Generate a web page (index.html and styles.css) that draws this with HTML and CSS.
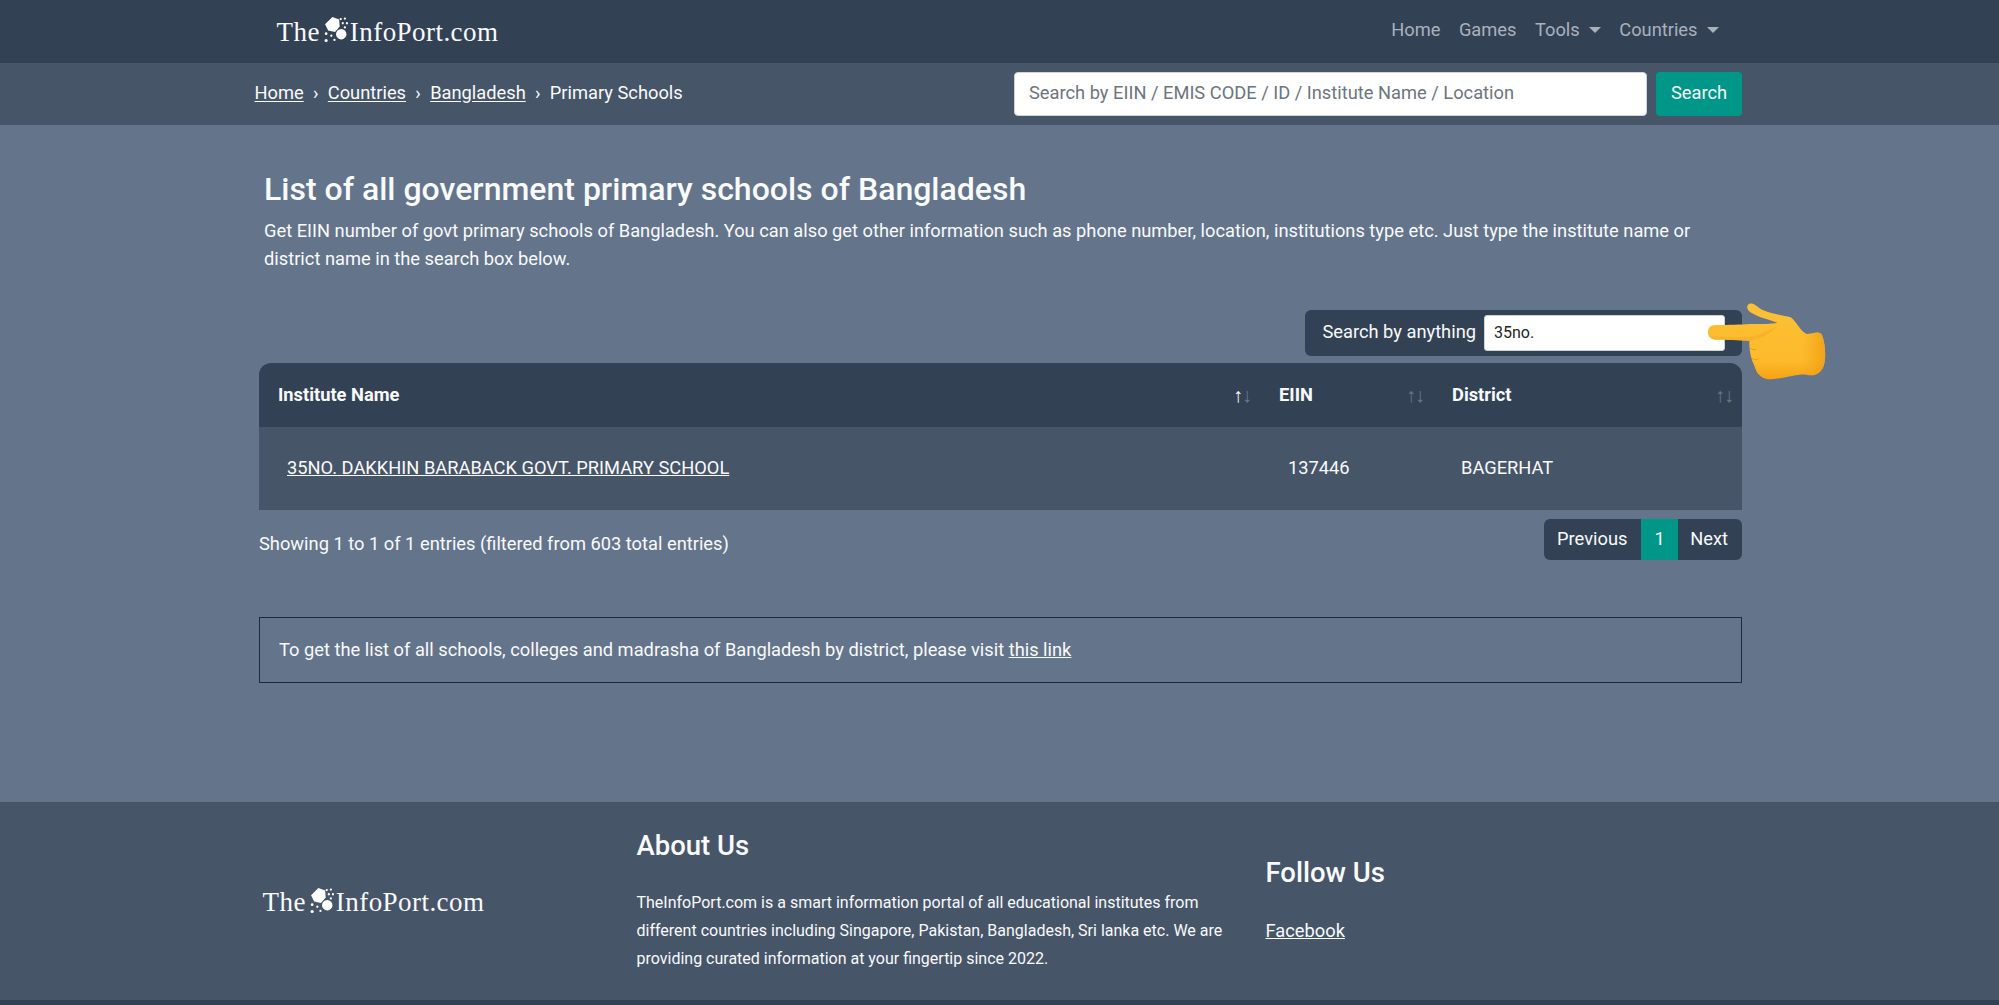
FILE: index.html
```html
<!DOCTYPE html>
<html lang="en">
<head>
<meta charset="utf-8">
<title>List of all government primary schools of Bangladesh</title>
<link rel="stylesheet" href="styles.css">
</head>
<body>
<svg class="defs" width="0" height="0" aria-hidden="true">
  <symbol id="mark" viewBox="0 0 24 24">
    <path d="M9 0l6.500 2.500.5 6.500-4.500 5.500-6.500-1.500L2 7z" fill="#fff"/>
    <circle cx="17.500" cy="16.500" r="5" fill="#fff"/>
    <circle cx="17" cy="2" r="1.100" fill="#fff"/><circle cx="21" cy="1.500" r="1.100" fill="#fff"/>
    <circle cx="19" cy="6" r="1.100" fill="#fff"/><circle cx="23" cy="6" r="1.100" fill="#fff"/>
    <circle cx="21" cy="10" r="1.100" fill="#fff"/><circle cx="3" cy="16" r="1.300" fill="#fff"/>
    <circle cx="8" cy="18" r="1.100" fill="#fff"/><circle cx="11" cy="22" r="1.100" fill="#fff"/>
    <circle cx="3" cy="22.500" r="1.500" fill="#fff"/>
  </symbol>
</svg>
<nav class="topnav">
  <div class="container topnav-in">
    <a class="logo" href="#">The<svg class="mark"><use href="#mark"/></svg>InfoPort.com</a>
    <ul class="menu">
      <li>Home</li><li>Games</li><li class="drop">Tools</li><li class="drop">Countries</li>
    </ul>
  </div>
</nav>
<div class="crumbbar">
  <div class="container crumb-in">
    <div class="crumbs"><a href="#">Home</a><span class="sep">›</span><a href="#">Countries</a><span class="sep">›</span><a href="#">Bangladesh</a><span class="sep">›</span><span>Primary Schools</span></div>
    <form class="topsearch">
      <input class="topinput" type="text" placeholder="Search by EIIN / EMIS CODE / ID / Institute Name / Location">
      <button class="btn-green" type="button">Search</button>
    </form>
  </div>
</div>
<main class="container main">
  <div class="intro">
    <h1>List of all government primary schools of Bangladesh</h1>
    <p>Get EIIN number of govt primary schools of Bangladesh. You can also get other information such as phone number, location, institutions type etc. Just type the institute name or district name in the search box below.</p>
  </div>
  <div class="filter-row">
    <label class="filter">Search by anything <input class="filter-input" type="text" value="35no."></label>
    <svg class="hand" viewBox="0 0 405 285" aria-hidden="true">
      <defs>
        <linearGradient id="hg" x1="0" y1="0" x2="0" y2="1"><stop offset="0" stop-color="#fcc035"/><stop offset=".75" stop-color="#fdba2c"/><stop offset="1" stop-color="#f5a312"/></linearGradient>
        <linearGradient id="hs" x1="0" y1="0" x2="1" y2="0"><stop offset="0" stop-color="#f3a112" stop-opacity="0"/><stop offset=".8" stop-color="#f3a112" stop-opacity="0"/><stop offset="1" stop-color="#ef9a0e" stop-opacity=".75"/></linearGradient>
      </defs>
      <path d="M24 112C26 96 36 93 50 93C90 93 120 92 150 90C185 90 215 90 232 86C192 72 162 65 146 50C136 38 144 26 158 29C168 32 175 42 190 49C215 60 250 64 272 70C288 80 300 112 320 120C340 119 358 108 366 123C376 150 379 190 371 216C362 240 342 248 320 242C290 240 260 252 215 256C188 257 170 242 163 215C153 195 147 170 148 141C120 137 80 139 45 137C30 135 22 124 24 112Z" fill="url(#hg)"/>
      <path d="M24 112C26 96 36 93 50 93C90 93 120 92 150 90C185 90 215 90 232 86C192 72 162 65 146 50C136 38 144 26 158 29C168 32 175 42 190 49C215 60 250 64 272 70C288 80 300 112 320 120C340 119 358 108 366 123C376 150 379 190 371 216C362 240 342 248 320 242C290 240 260 252 215 256C188 257 170 242 163 215C153 195 147 170 148 141C120 137 80 139 45 137C30 135 22 124 24 112Z" fill="url(#hs)"/>
      <path d="M28 126C60 131 120 131 160 127C180 121 205 112 232 96C212 118 188 134 150 141C120 137 80 139 45 137C36 135 31 131 28 126Z" fill="#f0a018" opacity=".35"/>
      <path d="M150 162C156 167 162 168 168 166M155 192C161 198 167 198 173 196" stroke="#eb9a14" stroke-width="3" fill="none"/>
    </svg>
  </div>
  <table class="data">
    <thead>
      <tr>
        <th class="c1"><span>Institute Name</span><span class="sort"><b>↑</b>↓</span></th>
        <th class="c2"><span>EIIN</span><span class="sort">↑↓</span></th>
        <th class="c3"><span>District</span><span class="sort">↑↓</span></th>
      </tr>
    </thead>
    <tbody>
      <tr><td><a href="#">35NO. DAKKHIN BARABACK GOVT. PRIMARY SCHOOL</a></td><td>137446</td><td>BAGERHAT</td></tr>
    </tbody>
  </table>
  <div class="table-foot">
    <div class="info">Showing 1 to 1 of 1 entries (filtered from 603 total entries)</div>
    <div class="pager"><span>Previous</span><span class="on">1</span><span>Next</span></div>
  </div>
  <div class="notice">To get the list of all schools, colleges and madrasha of Bangladesh by district, please visit <a href="#">this link</a></div>
</main>
<footer class="footer">
  <div class="container footer-in">
    <div class="f-logo"><a class="logo" href="#">The<svg class="mark"><use href="#mark"/></svg>InfoPort.com</a></div>
    <div class="f-about">
      <h3>About Us</h3>
      <p>TheInfoPort.com is a smart information portal of all educational institutes from different countries including Singapore, Pakistan, Bangladesh, Sri lanka etc. We are providing curated information at your fingertip since 2022.</p>
    </div>
    <div class="f-follow">
      <h3>Follow Us</h3>
      <a href="#">Facebook</a>
    </div>
  </div>
</footer>
<div class="bottom"></div>
</body>
</html>
```
FILE: styles.css
```css
* { box-sizing: border-box; }
html, body { margin: 0; padding: 0; }
body { background: #64748b; color: #f8fafc; font-family: Roboto, "Liberation Sans", sans-serif; font-size: 18.3px; line-height: 1.5; overflow: hidden; height: 1005px; }
a { color: inherit; }
.defs { position: absolute; }
.container { width: 1500px; margin: 0 auto; padding: 0 5px; }
.topnav { background: #334155; height: 63px; }
.topnav-in { display: flex; justify-content: space-between; align-items: center; height: 63px; padding-left: 27px; padding-right: 31px; }
.logo { display: flex; align-items: center; padding-top: 1px; font-family: "Liberation Serif", serif; font-size: 27px; letter-spacing: .45px; color: #f8fafc; text-decoration: none; line-height: 1; }
.mark { width: 25px; height: 25px; margin: -5px 2px 0 3px; }
.menu { display: flex; list-style: none; margin: 0 0 4px; padding: 0; gap: 18.500px; color: #a9b1bc; font-size: 18.3px; }
.drop::after { content: ""; display: inline-block; margin-left: 9px; vertical-align: 3px; border-top: 6px solid; border-left: 6px solid transparent; border-right: 6px solid transparent; }
.crumbbar { background: #475569; height: 62px; }
.crumb-in { display: flex; justify-content: space-between; align-items: center; height: 62px; padding-right: 7.500px; }
.crumbs { margin-top: -3px; }
.crumbs a { text-underline-offset: 2px; }
.sep { margin: 0 9.300px; }
.topsearch { display: flex; gap: 9px; }
.topinput { width: 633px; height: 44px; border: 1px solid #ced4da; border-radius: 4px; padding: 0 14px 3px; font: 18.3px Roboto, sans-serif; color: #334155; background: #fff; }
.topinput::placeholder { color: #6c757d; opacity: 1; }
.btn-green { width: 86px; height: 44px; border: 0; border-radius: 4px; padding: 0 0 3px; background: #009688; color: #f8fafc; font: 18.3px Roboto, sans-serif; }
.main { padding: 0 7.500px 0 9.500px; height: 677px; }
.intro { padding: 45px 5px 0; }
h1 { margin: 0 0 9px; font-size: 32px; line-height: 1.2; font-weight: 500; }
.intro p { margin: 0; font-size: 18.3px; line-height: 28px; }
.filter-row { position: relative; display: flex; justify-content: flex-end; margin-top: 37px; }
.filter { display: flex; align-items: center; gap: 8px; height: 46px; background: #334155; border-radius: 6px; padding: 0 17px 3px 17px; font-size: 18.3px; }
.filter-input { width: 241px; height: 36px; margin-top: 3px; border: 1px solid #ced4da; border-radius: 3px; padding: 0 9px 2px; font: 16px Roboto, sans-serif; color: #212529; background: #fff; }
.hand { position: absolute; right: -93px; top: -16px; width: 135px; height: 95px; }
.data { width: 100%; margin-top: 7px; border-collapse: separate; border-spacing: 0; table-layout: fixed; }
.data th { background: #334155; height: 64px; padding: 0 9px 2px 19px; text-align: left; font-size: 18.3px; font-weight: 700; position: relative; }
.data th.c1 { width: 1001px; border-top-left-radius: 12px; }
.data th.c2 { width: 173px; }
.data th.c3 { border-top-right-radius: 12px; }
.sort { position: absolute; right: 9px; top: 17px; color: #6b7788; font-family: "Liberation Sans", sans-serif; font-size: 20px; font-weight: 700; letter-spacing: -1px; }
.sort b { color: #f8fafc; }
.data td { background: #475569; height: 83px; padding: 0 10px 3px 28px; font-size: 18.3px; }
.table-foot { display: flex; justify-content: space-between; align-items: flex-start; margin-top: 9px; }
.info { margin-top: 11px; }
.pager { display: flex; height: 41px; line-height: 39px; background: #334155; border-radius: 6px; overflow: hidden; }
.pager span { padding: 0 13.500px 0 13.500px; }
.pager span:last-child { padding: 0 14px 0 12px; }
.pager .on { background: #009688; padding: 0 13.500px; }
.notice { margin-top: 57px; height: 66px; line-height: 64px; border: 1px solid #1e293b; padding: 0 19px; }
.footer { background: #475569; height: 198px; }
.footer-in { display: flex; height: 198px; }
.f-logo { width: 382px; padding: 86px 0 0 8px; }
.f-about { width: 629px; padding-top: 27px; }
.f-about p { margin: 0; font-size: 16px; line-height: 28px; width: 610px; }
h3 { margin: 0 0 16px; font-size: 27.500px; line-height: 1.2; font-weight: 500; }
.f-about h3 { margin-bottom: 27px; }
.f-follow { padding-top: 54px; }
.f-follow h3 { margin-bottom: 28px; }
.bottom { background: #334155; height: 5px; }
```
